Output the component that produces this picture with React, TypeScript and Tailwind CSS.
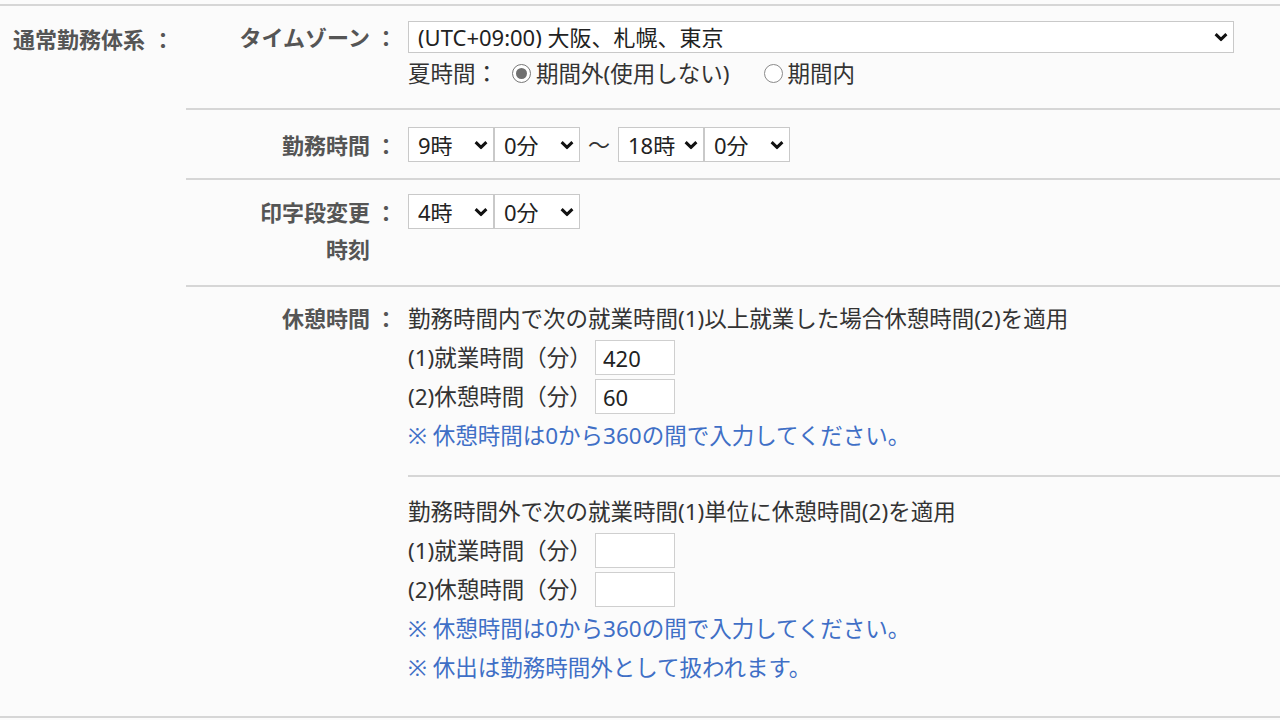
import React from 'react';

const font = "font-['Noto_Sans','Noto_Sans_CJK_JP',sans-serif]";

function Chevron() {
  return (
    <svg width="14" height="9" viewBox="0 0 14 9" className="pointer-events-none block">
      <path d="M1.6 1.6 7 6.8 12.4 1.6" fill="none" stroke="#111" strokeWidth="3" />
    </svg>
  );
}

function Select({ value, className }: { value: string; className: string }) {
  return (
    <div className={`relative ${className}`}>
      <select
        defaultValue={value}
        className={`h-full w-full appearance-none border border-[#c9c9c9] bg-white pl-[9px] text-[22px] leading-none text-[#222] outline-none ${font}`}
      >
        <option>{value}</option>
      </select>
      <span className="absolute right-[6px] top-1/2 -translate-y-1/2">
        <Chevron />
      </span>
    </div>
  );
}

function NumInput({ value }: { value: string }) {
  return (
    <input
      readOnly
      value={value}
      className={`h-[35px] w-[80px] border border-[#cfcfcf] bg-white px-[7px] text-[22px] text-[#222] outline-none ${font}`}
    />
  );
}

function Label({ lines }: { lines: string[] }) {
  return (
    <div className="flex w-[222px] shrink-0 text-[22px] font-bold text-[#555]">
      <div className="w-[184px] text-right leading-[37px]">
        {lines.map((l) => (
          <div key={l}>{l}</div>
        ))}
      </div>
      <div className="ml-[5px] w-[22px] leading-[37px]">：</div>
    </div>
  );
}

function Radio({ checked, label }: { checked?: boolean; label: string }) {
  return (
    <label className="flex items-center">
      <span
        className={`flex h-[19px] w-[19px] items-center justify-center rounded-full border bg-white ${
          checked ? 'border-[#777]' : 'border-[#8a8a8a]'
        }`}
      >
        {checked && <span className="h-[11px] w-[11px] rounded-full bg-[#6f6f6f]" />}
      </span>
      <span className="ml-[5px]">{label}</span>
    </label>
  );
}

function Line({ children, className = '' }: { children: React.ReactNode; className?: string }) {
  return <div className={`flex h-[39px] items-center ${className}`}>{children}</div>;
}

export default function App() {
  return (
    <div className={`min-h-screen bg-[#fbfbfb] pt-[4px] text-[#333] ${font}`}>
      <div className="flex border-y-2 border-[#d6d6d6]">
        {/* left section title */}
        <div className="flex w-[186px] shrink-0 pl-[13px] pt-[15px] text-[22px] font-bold leading-[37px] text-[#555]">
          <span>通常勤務体系</span>
          <span className="ml-[7px]">：</span>
        </div>

        <div className="flex-1">
          {/* time zone */}
          <div className="flex border-b-2 border-[#d6d6d6] pb-[15px] pt-[15px]">
            <div className="h-[32px] -translate-y-[2px]">
              <Label lines={['タイムゾーン']} />
            </div>
            <div className="flex-1 pr-[46px] text-[22.5px]">
              <Select value="(UTC+09:00) 大阪、札幌、東京" className="h-[32px] w-full" />
              <Line className="mt-[1px]">
                <span>夏時間：</span>
                <span className="ml-[14px]">
                  <Radio checked label="期間外(使用しない)" />
                </span>
                <span className="ml-[34px]">
                  <Radio label="期間内" />
                </span>
              </Line>
            </div>
          </div>

          {/* work hours */}
          <div className="flex border-b-2 border-[#d6d6d6] pb-[14px] pt-[17px]">
            <Label lines={['勤務時間']} />
            <div className="flex h-[35px] items-center text-[22px]">
              <Select value="9時" className="h-[35px] w-[86px]" />
              <Select value="0分" className="h-[35px] w-[86px]" />
              <span className="w-[38px] text-center">～</span>
              <Select value="18時" className="h-[35px] w-[86px]" />
              <Select value="0分" className="h-[35px] w-[86px]" />
            </div>
          </div>

          {/* stamp change time */}
          <div className="flex border-b-2 border-[#d6d6d6] pb-[17px] pt-[14px]">
            <Label lines={['印字段変更', '時刻']} />
            <div className="flex h-[35px] items-center">
              <Select value="4時" className="h-[35px] w-[86px]" />
              <Select value="0分" className="h-[35px] w-[86px]" />
            </div>
          </div>

          {/* break time */}
          <div className="flex pb-[29px] pt-[12px]">
            <div className="pt-[1px]">
              <Label lines={['休憩時間']} />
            </div>
            <div className="flex-1 text-[22.5px]">
              <Line>勤務時間内で次の就業時間(1)以上就業した場合休憩時間(2)を適用</Line>
              <Line>
                <span className="w-[187px]">(1)就業時間（分）</span>
                <NumInput value="420" />
              </Line>
              <Line>
                <span className="w-[187px]">(2)休憩時間（分）</span>
                <NumInput value="60" />
              </Line>
              <Line className="text-[#3f6fc6]">※ 休憩時間は0から360の間で入力してください。</Line>

              <div className="mb-[15px] mt-[20px] border-t-2 border-[#d6d6d6]" />

              <Line>勤務時間外で次の就業時間(1)単位に休憩時間(2)を適用</Line>
              <Line>
                <span className="w-[187px]">(1)就業時間（分）</span>
                <NumInput value="" />
              </Line>
              <Line>
                <span className="w-[187px]">(2)休憩時間（分）</span>
                <NumInput value="" />
              </Line>
              <Line className="text-[#3f6fc6]">※ 休憩時間は0から360の間で入力してください。</Line>
              <Line className="text-[#3f6fc6]">※ 休出は勤務時間外として扱われます。</Line>
            </div>
          </div>
        </div>
      </div>
    </div>
  );
}
